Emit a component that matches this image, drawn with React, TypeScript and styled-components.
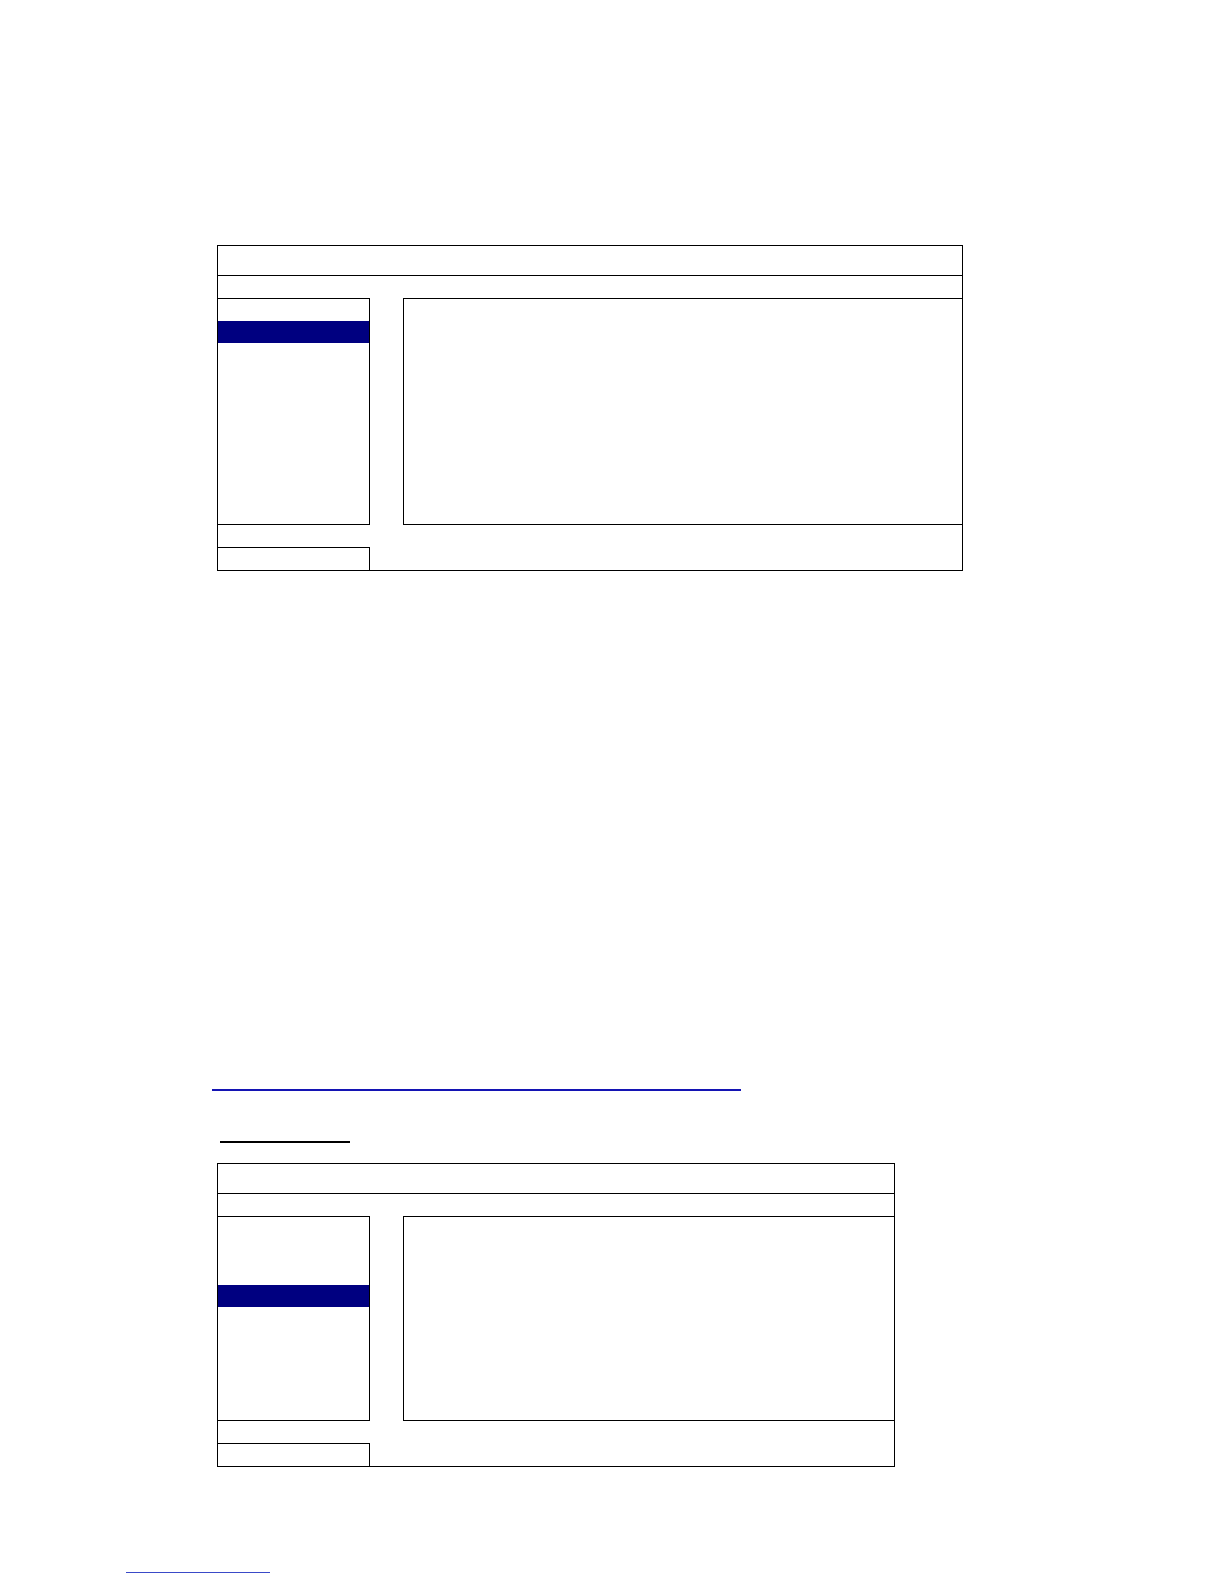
import React from 'react'
import styled, { createGlobalStyle } from 'styled-components'

const GlobalStyle = createGlobalStyle`
  html, body {
    margin: 0;
    padding: 0;
    background: #ffffff;
    font-family: "Liberation Sans", Arial, sans-serif;
  }
`

const Page = styled.div`
  width: 1224px;
  min-height: 1584px;
  padding-top: 245px;
  box-sizing: border-box;
  background: #ffffff;
`

const Window = styled.div<{ $width: number; $gap: number }>`
  box-sizing: border-box;
  width: ${(p) => p.$width}px;
  margin-left: 217px;
  margin-top: ${(p) => p.$gap}px;
  border: 1px solid #000;
  display: flex;
  flex-direction: column;
`

const TitleBar = styled.div`
  height: 29px;
  border-bottom: 1px solid #000;
`

const SubBar = styled.div`
  height: 22px;
`

const Body = styled.div<{ $height: number }>`
  display: flex;
  height: ${(p) => p.$height}px;
  gap: 33px;
`

const MenuList = styled.ul<{ $offset: number }>`
  box-sizing: border-box;
  width: 152px;
  margin: 0;
  padding: ${(p) => p.$offset}px 0 0;
  list-style: none;
  overflow: hidden;
  border-top: 1px solid #000;
  border-right: 1px solid #000;
  border-bottom: 1px solid #000;
`

const MenuItem = styled.li<{ $active: boolean }>`
  height: 22px;
  background: ${(p) => (p.$active ? '#000080' : 'transparent')};
`

const Content = styled.div`
  box-sizing: border-box;
  flex: 1;
  border-top: 1px solid #000;
  border-left: 1px solid #000;
  border-bottom: 1px solid #000;
`

const Footer = styled.div`
  height: 22px;
`

const StatusBox = styled.div`
  box-sizing: border-box;
  width: 152px;
  height: 23px;
  border-top: 1px solid #000;
  border-right: 1px solid #000;
`

const LinkRule = styled.div`
  width: 529px;
  height: 2px;
  margin: 518px 0 0 212px;
  background: #1414b4;
`

const HeadingRule = styled.div`
  width: 130px;
  height: 2px;
  margin: 50px 0 0 220px;
  background: #000;
`

const FootnoteRule = styled.div`
  width: 144px;
  height: 1px;
  margin: 105px 0 0 126px;
  background: #3a4ac8;
`

type MenuWindowProps = {
  width: number
  bodyHeight: number
  selected: number
  rows: number
  offset?: number
  gap?: number
}

const MenuWindow: React.FC<MenuWindowProps> = ({
  width,
  bodyHeight,
  selected,
  rows,
  offset = 0,
  gap = 0,
}) => (
  <Window $width={width} $gap={gap}>
    <TitleBar />
    <SubBar />
    <Body $height={bodyHeight}>
      <MenuList $offset={offset}>
        {Array.from({ length: rows }).map((_, i) => (
          <MenuItem key={i} $active={i === selected} />
        ))}
      </MenuList>
      <Content />
    </Body>
    <Footer />
    <StatusBox />
  </Window>
)

const App: React.FC = () => (
  <>
    <GlobalStyle />
    <Page>
      <MenuWindow width={746} bodyHeight={227} selected={1} rows={10} />
      <LinkRule />
      <HeadingRule />
      <MenuWindow width={678} bodyHeight={205} selected={3} rows={8} offset={2} gap={20} />
      <FootnoteRule />
    </Page>
  </>
)

export default App
